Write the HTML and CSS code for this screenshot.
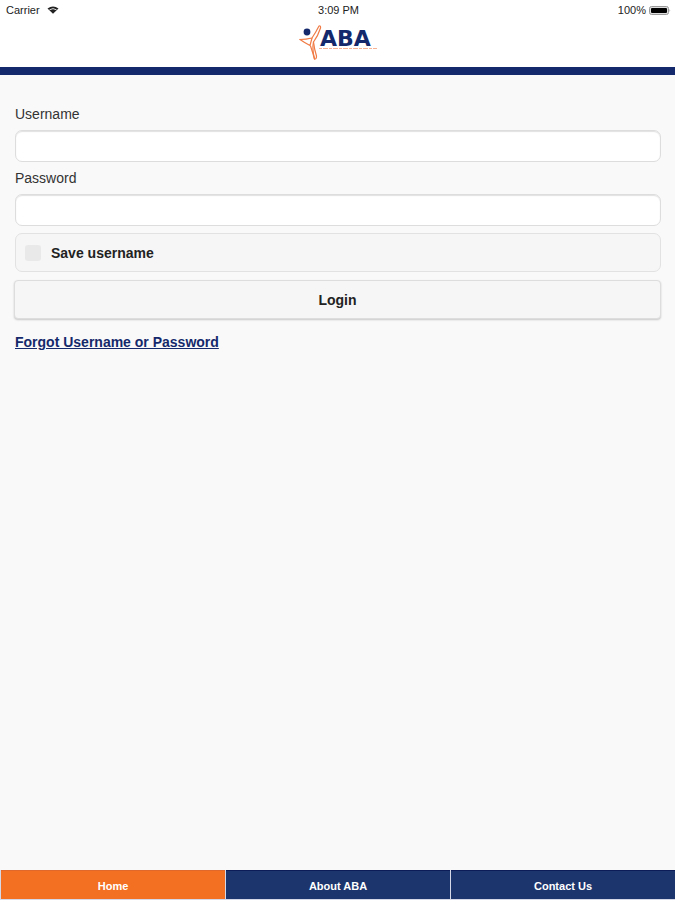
FILE: index.html
```
<!DOCTYPE html>
<html lang="en">
<head>
  <meta charset="UTF-8">
  <meta name="viewport" content="width=device-width, initial-scale=1.0">
  <title>ABA</title>
  <link rel="stylesheet" href="styles.css">
</head>
<body>

<header>
  <div class="status">
    <div class="carrier">
      <span>Carrier</span>
      <svg width="12" height="8" viewBox="0 0 12 8">
        <path d="M0.500 2.500Q6-1.500 11.500 2.500L6 7.800z" fill="#222"/>
        <path d="M2.500 3.800Q6 1.500 9.500 3.800" fill="none" stroke="#ddd" stroke-width="1"/>
      </svg>
    </div>
    <div class="time">3:09 PM</div>
    <div class="battery">
      <span>100%</span>
      <svg width="22" height="9" viewBox="0 0 22 9">
        <rect x="0.5" y="0.5" width="19" height="8" rx="2" fill="#ddd" stroke="#999"/>
        <rect x="2" y="2" width="16" height="5" rx="1" fill="#000"/>
        <path d="M20.5 3q1.500 1.500 0 3z" fill="#999"/>
      </svg>
    </div>
  </div>
  <div class="brand">
    <svg width="78" height="38" viewBox="0 0 78 38" role="img" aria-label="ABA">
      <circle cx="8" cy="8" r="3.4" fill="#14296b"/>
      <g fill="none" stroke="#f07b45" stroke-width="1.2" stroke-linejoin="round" stroke-linecap="round">
        <path d="M1 15.500Q7 15.500 13 14Q17 8 20 2Q22 1.500 21.500 4Q19 12 14.500 18Q15.500 26 17.500 32Q17.500 35.500 15.500 35Q14 29 11.500 22"/>
        <path d="M1 15.500Q6 19 11 21.500L13 14"/>
        <path d="M14.500 18Q13 25 15.500 35"/>
      </g>
      <text class="logo-text" x="21" y="22">ABA</text>
      <path d="M20 24.500H78" stroke="#f5b294" stroke-width="1" stroke-dasharray="3 1 5 1"/>
    </svg>
  </div>
</header>

<main>
  <form>
    <label class="field-label" for="username">Username</label>
    <input class="field" type="text" id="username">
    <label class="field-label" for="password">Password</label>
    <input class="field" type="password" id="password">
    <label class="save" for="save">
      <input type="checkbox" id="save">
      Save username
    </label>
    <button class="login" type="button">Login</button>
  </form>
  <a class="forgot" href="#">Forgot Username or Password</a>
</main>

<nav>
  <a class="active" href="#">Home</a>
  <a href="#">About ABA</a>
  <a href="#">Contact Us</a>
</nav>

</body>
</html>
```
FILE: styles.css
```
* {
  box-sizing: border-box;
}
body {
  font-family: "Liberation Sans", Arial, sans-serif;
  font-size: 14px;
  line-height: 18px;
  color: #333;
  background-color: #f9f9f9;
  margin: 0;
  min-height: 100vh;
  display: flex;
  flex-direction: column;
}
header {
  background: #fff;
  border-bottom: 8px solid #14296b;
}
.status {
  display: grid;
  grid-template-columns: 1fr auto 1fr;
  align-items: center;
  height: 20px;
  padding: 0 4px 0 6px;
  font-size: 11px;
  color: #222;
}
.carrier, .battery {
  display: flex;
  align-items: center;
  gap: 7px;
}
.battery {
  justify-content: flex-end;
  gap: 3px;
}
.brand {
  display: flex;
  justify-content: center;
  height: 47px;
  padding-top: 4px;
}
.logo-text {
  font-family: "DejaVu Sans", Verdana, sans-serif;
  font-weight: bold;
  font-size: 22px;
  fill: #14296b;
}
main {
  flex: 1;
  padding: 30px 14px;
}
form {
  display: flex;
  flex-direction: column;
}
.field-label {
  margin: 0 1px 7px;
}
.field {
  height: 32px;
  margin: 0 0 7px 1px;
  padding: 0 8px;
  font: inherit;
  background: #fff;
  border: 1px solid #ddd;
  border-radius: 7px;
  box-shadow: inset 0 1px 1px rgba(0,0,0,0.12);
}
.save {
  display: flex;
  align-items: center;
  gap: 10px;
  height: 39px;
  margin: 0 0 8px 1px;
  padding: 0 9px;
  font-weight: bold;
  color: #222;
  background: #f6f6f6;
  border: 1px solid #e2e2e2;
  border-radius: 7px;
}
.save input {
  appearance: none;
  width: 16px;
  height: 16px;
  margin: 0;
  background: #e9e9e9;
  border-radius: 3px;
}
.save input:checked {
  background: #14296b;
}
.login {
  height: 39px;
  margin-bottom: 14px;
  font: inherit;
  font-weight: bold;
  color: #222;
  background: #f6f6f6;
  border: 1px solid #ddd;
  border-radius: 4px;
  box-shadow: 0 1px 2px rgba(0,0,0,0.2);
}
.forgot {
  margin-left: 1px;
  font-weight: bold;
  color: #14296b;
}
nav {
  display: flex;
  gap: 1px;
  padding: 0 0 1px 1px;
  background: #d5d8e6;
}
nav a {
  flex: 1;
  height: 29px;
  line-height: 31px;
  font-size: 11px;
  font-weight: bold;
  text-align: center;
  text-decoration: none;
  color: #fff;
  background: #1d356d;
  border-top: 1px solid #0c1c58;
}
nav a.active {
  background: #f36f21;
  border-top-color: #e0682a;
}
```
